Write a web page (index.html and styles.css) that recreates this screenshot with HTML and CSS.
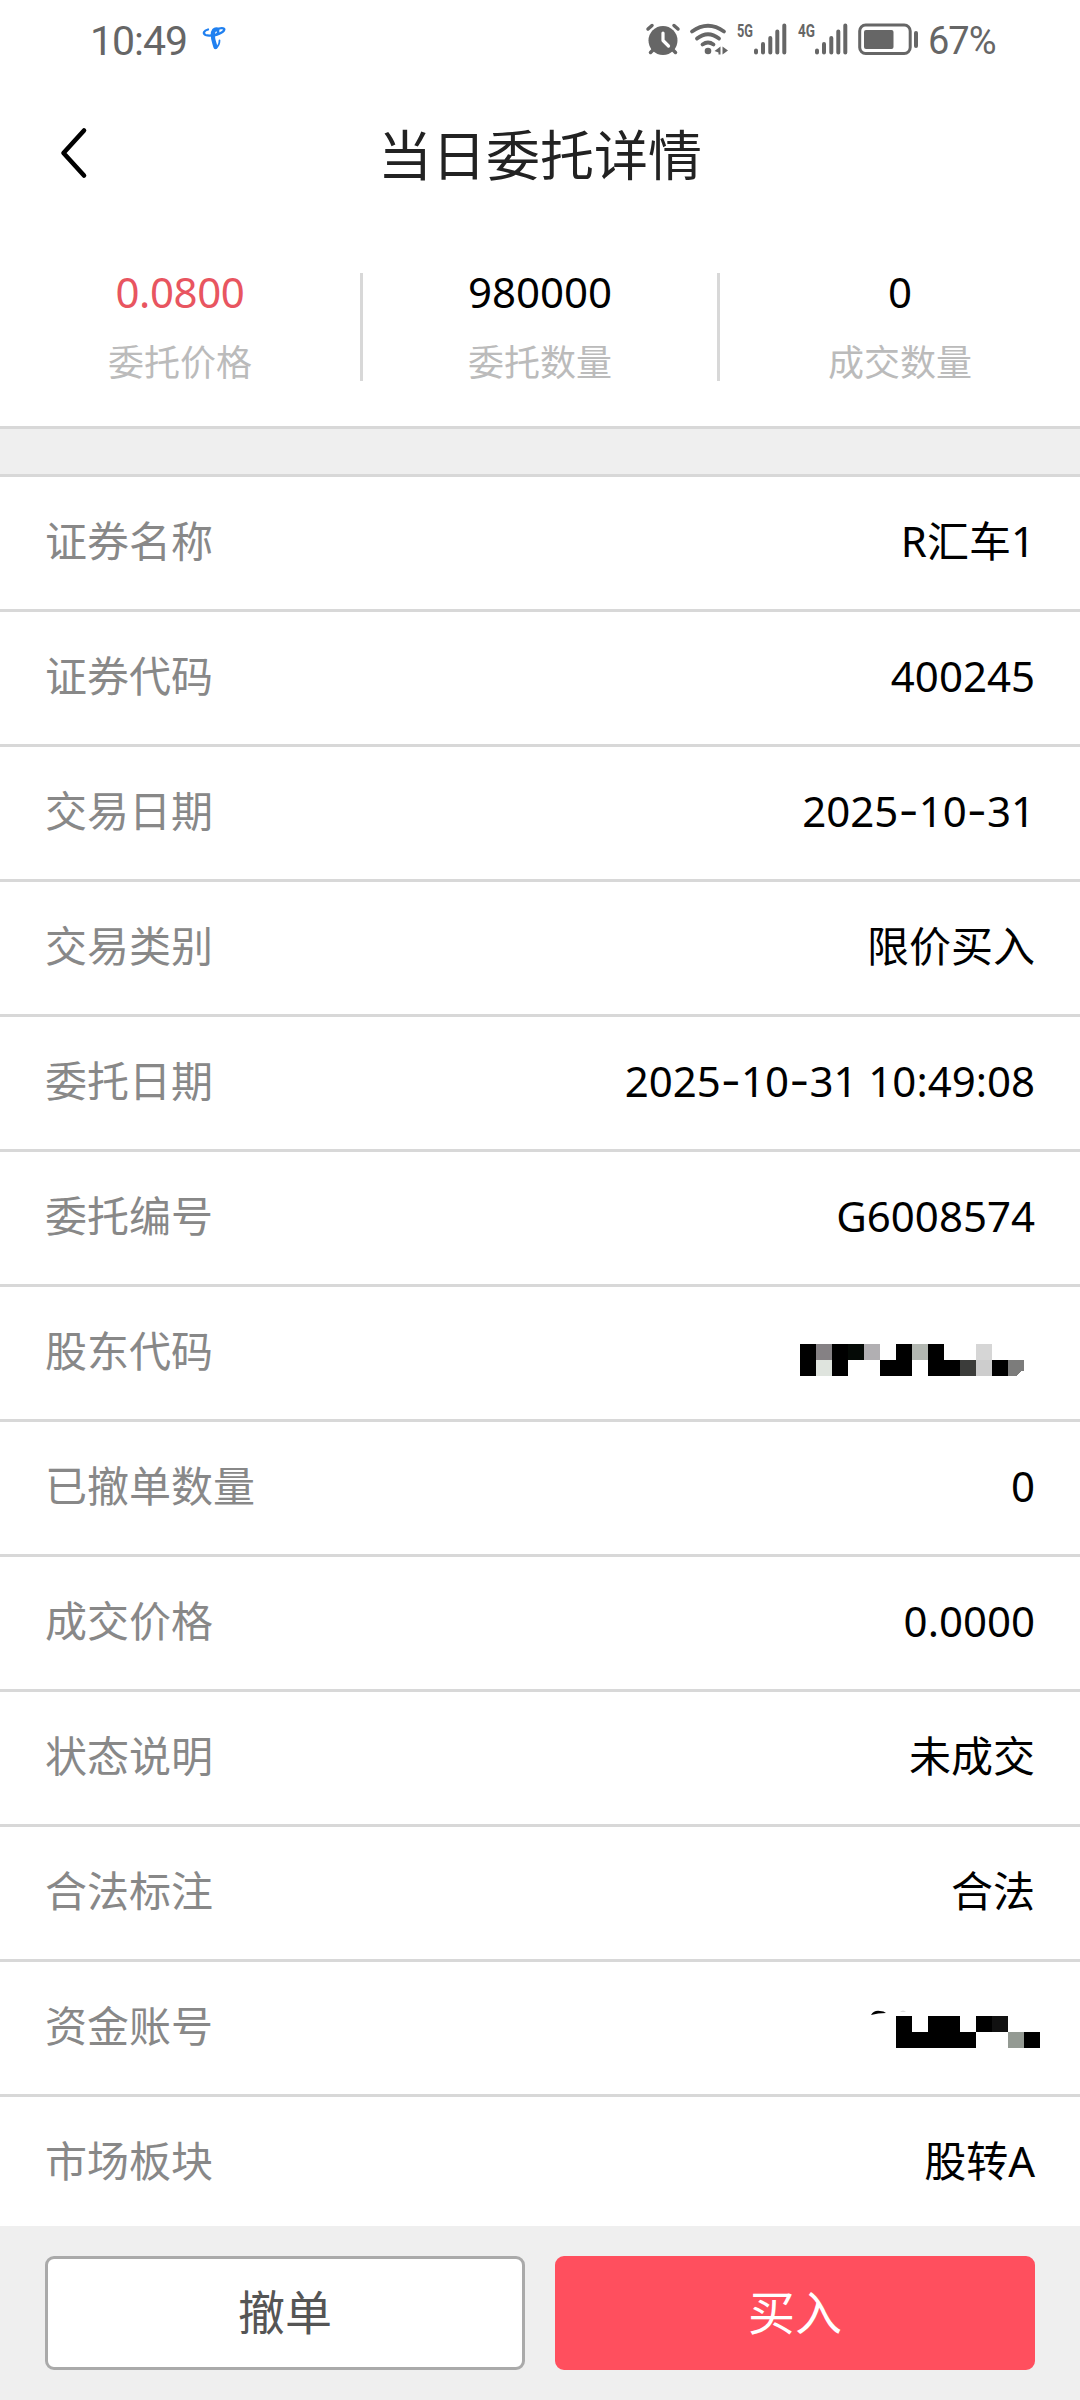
FILE: index.html
```html
<!DOCTYPE html>
<html lang="zh-CN">
<head>
    <meta charset="UTF-8">
    <meta name="viewport" content="width=device-width, initial-scale=1.0">
    <title>当日委托详情</title>
    <link rel="stylesheet" href="styles.css">
</head>
<body>
    <div class="page">
        <div class="status-bar">
            <span class="time">10:49</span>
            <svg class="carrier" width="26" height="26" viewBox="0 0 26 26" fill="none" stroke="#2080f0" stroke-linecap="round" stroke-linejoin="round">
                <path d="M6 3.500C2 4.500 0.500 7.500 3.500 9C8 10.500 19 8.500 22 4.500C23.500 2 20 1.800 17 2.500" stroke-width="2.300"/>
                <path d="M15.500 3.500C12.500 2.500 10.800 5 10.800 9C10.800 14 12.500 17 13.500 21" stroke-width="4.200"/>
                <path d="M12 9.500C16 9 17 6.500 15.500 3.500" stroke-width="2.500"/>
                <path d="M14 22C16.500 20 17.500 17.500 17.500 14.500" stroke-width="1.800"/>
            </svg>
            <div class="status-icons">
                <svg class="alarm" width="38" height="40" viewBox="0 0 38 40">
                    <circle cx="19" cy="20.500" r="14.500" fill="#666"/>
                    <path d="M4 9L8 5.500M34 9L30 5.500M9 30L6.500 32.500M29 30L31.500 32.500" stroke="#666" stroke-width="3.500" stroke-linecap="round"/>
                    <path d="M19 13V20.500L24.500 26" fill="none" stroke="#fff" stroke-width="3.200" stroke-linecap="round" stroke-linejoin="round"/>
                </svg>
                <svg class="wifi" width="44" height="40" viewBox="0 0 44 40">
                    <path d="M5 11.500Q21 0 37 11.500M10 18.500Q21 10 32 18.500M15.500 24.500Q21 20.500 26.500 24.500" fill="none" stroke="#666" stroke-width="3.800" stroke-linecap="round"/>
                    <circle cx="21" cy="31" r="3.300" fill="#666"/>
                    <path d="M27.500 31L33.500 26.500V34.500H31.500V32.500ZM41 30.500L35.500 26.500V34.500Z" fill="#666"/>
                </svg>
                <svg class="signal" width="56" height="40" viewBox="0 0 56 40">
                    <text class="net" x="3" y="17" textLength="16" lengthAdjust="spacingAndGlyphs">5G</text>
                    <path d="M22 30.500V32.500M29 24V32.500M36.300 18V32.500M43.300 11.500V32.500M50.300 5.500V32.500" stroke="#666" stroke-width="4" stroke-linecap="round"/>
                </svg>
                <svg class="signal" width="56" height="40" viewBox="0 0 56 40">
                    <text class="net" x="3" y="17" textLength="17" lengthAdjust="spacingAndGlyphs">4G</text>
                    <path d="M22 30.500V32.500M29 24V32.500M36.300 18V32.500M43.300 11.500V32.500M50.300 5.500V32.500" stroke="#666" stroke-width="4" stroke-linecap="round"/>
                </svg>
                <svg class="battery" width="64" height="40" viewBox="0 0 64 40">
                    <rect x="3.700" y="5" width="50.500" height="28.500" rx="6" fill="none" stroke="#666" stroke-width="3"/>
                    <rect x="8" y="10" width="29.500" height="19" rx="2" fill="#666"/>
                    <path d="M60 13V26" stroke="#666" stroke-width="4" stroke-linecap="round"/>
                </svg>
            </div>
            <span class="percent">67%</span>
        </div>

        <div class="title-bar">
            <a href="#" class="back">
                <svg width="32" height="54" viewBox="0 0 32 54">
                    <path d="M27 4.500L6.500 27L27 49.500" fill="none" stroke="#000" stroke-width="4.600" stroke-linecap="round" stroke-linejoin="round"/>
                </svg>
            </a>
            <h1 class="title">当日委托详情</h1>
        </div>

        <div class="summary">
            <div class="summary-item">
                <div class="num red">0.0800</div>
                <div class="name">委托价格</div>
            </div>
            <div class="summary-item middle">
                <div class="num">980000</div>
                <div class="name">委托数量</div>
            </div>
            <div class="summary-item">
                <div class="num">0</div>
                <div class="name">成交数量</div>
            </div>
        </div>

        <div class="gap"></div>

        <div class="list">
            <div class="row"><span class="label">证券名称</span><span class="value">R汇车1</span></div>
            <div class="row"><span class="label">证券代码</span><span class="value">400245</span></div>
            <div class="row"><span class="label">交易日期</span><span class="value">2025<i>-</i>10<i>-</i>31</span></div>
            <div class="row"><span class="label">交易类别</span><span class="value">限价买入</span></div>
            <div class="row"><span class="label">委托日期</span><span class="value">2025<i>-</i>10<i>-</i>31 10:49:08</span></div>
            <div class="row"><span class="label">委托编号</span><span class="value">G6008574</span></div>
            <div class="row">
                <span class="label">股东代码</span>
                <svg class="mosaic" width="235" height="132" viewBox="0 0 235 132" shape-rendering="crispEdges">
                    <path d="M0 57H16V89H0ZM32 57H48V89H32ZM96 57H112V89H80V73H96ZM128 57H144V73H160V89H128ZM192 73H208V89H192Z"/>
                    <rect x="16" y="57" width="16" height="16" fill="#858184"/>
                    <rect x="16" y="73" width="16" height="16" fill="#dfe4de"/>
                    <rect x="48" y="57" width="16" height="16" fill="#050a06"/>
                    <rect x="64" y="57" width="16" height="16" fill="#b1afb2"/>
                    <rect x="112" y="57" width="16" height="16" fill="#b3b8b2"/>
                    <rect x="160" y="73" width="16" height="16" fill="#3b3c3a"/>
                    <rect x="176" y="57" width="16" height="16" fill="#d6d6d6"/>
                    <rect x="176" y="73" width="16" height="16" fill="#cdcdcd"/>
                    <path d="M208 73H224V84H221L216 89H208Z" fill="#7c7c7b"/>
                </svg>
            </div>
            <div class="row"><span class="label">已撤单数量</span><span class="value">0</span></div>
            <div class="row"><span class="label">成交价格</span><span class="value">0.0000</span></div>
            <div class="row"><span class="label">状态说明</span><span class="value">未成交</span></div>
            <div class="row"><span class="label">合法标注</span><span class="value">合法</span></div>
            <div class="row">
                <span class="label">资金账号</span>
                <svg class="mosaic" width="165" height="132" viewBox="0 0 165 132">
                    <path d="M1 53Q4 48 10 49Q14 49 16 51Q8 51 1 53Z"/>
                    <path d="M30 49.500Q33 48 36 49.500Z" fill="#bbb"/>
                    <path d="M26 54H42V70H58V54H90V70H106V86H26ZM106 54H122V70H106ZM154 70H170V86H154Z"/>
                    <rect x="122" y="54" width="16" height="16" fill="#111"/>
                    <rect x="138" y="70" width="16" height="16" fill="#949a93"/>
                </svg>
            </div>
            <div class="row"><span class="label">市场板块</span><span class="value">股转A</span></div>
        </div>

        <div class="footer">
            <button class="btn cancel">撤单</button>
            <button class="btn buy">买入</button>
        </div>
    </div>
</body>
</html>
```
FILE: styles.css
```css
* {
    box-sizing: border-box;
}
body, html {
    margin: 0;
    padding: 0;
    height: 100%;
    overflow: hidden;
}
body {
    background: #fff;
    color: #000;
    font-family: "Noto Sans", "Noto Sans CJK SC", sans-serif;
}
svg {
    display: block;
    flex: none;
    overflow: visible;
}
.page {
    display: flex;
    flex-direction: column;
    height: 100%;
}
.status-bar {
    display: flex;
    align-items: center;
    flex: none;
    height: 80px;
    padding: 0 83px 0 90px;
    color: #666;
    font-family: Roboto, sans-serif;
}
.time {
    width: 112px;
    padding-top: 2px;
    font-size: 41px;
    letter-spacing: -1px;
}
.carrier {
    margin-bottom: 2px;
}
.status-icons {
    display: flex;
    gap: 5px;
    margin-left: auto;
}
.wifi {
    margin-right: -2px;
}
.net {
    fill: #666;
    font-size: 18px;
    font-weight: bold;
}
.percent {
    width: 69px;
    margin-left: 8px;
    padding-top: 2px;
    font-size: 38px;
    letter-spacing: -1px;
    white-space: nowrap;
}
.title-bar {
    display: flex;
    align-items: center;
    flex: none;
    height: 146px;
    padding: 0 57px;
}
.back {
    width: 32px;
}
.title {
    flex: 1;
    margin: 4px 32px 0 0;
    color: #222;
    font-size: 54px;
    font-weight: normal;
    line-height: 80px;
    text-align: center;
}
.summary {
    display: flex;
    flex: none;
    height: 200px;
    padding-top: 47px;
}
.summary-item {
    flex: 1;
    height: 108px;
    text-align: center;
}
.middle {
    flex: 0 0 360px;
    border: solid #d8d8d8;
    border-width: 0 3px;
}
.num {
    font-size: 42px;
    line-height: 38px;
}
.red {
    color: #e85560;
    letter-spacing: -0.4px;
}
.name {
    margin-top: 32px;
    color: #bbb;
    font-size: 36px;
    line-height: 40px;
}
.gap {
    flex: none;
    height: 51px;
    background: #efefef;
    border-top: 3px solid #d8d8d8;
    border-bottom: 3px solid #d8d8d8;
}
.list {
    flex: 1;
    min-height: 0;
    overflow: hidden;
}
.row {
    display: flex;
    justify-content: space-between;
    height: 135px;
    padding: 0 45px;
    border-bottom: 3px solid #d8d8d8;
    font-size: 42px;
    line-height: 128px;
}
.row:last-child {
    border-bottom: none;
}
.label {
    color: #888;
}
/* wider dash in dates */
.value i {
    font-family: Inter, sans-serif;
    font-size: 44px;
    font-style: normal;
    line-height: 1;
}
.footer {
    display: flex;
    gap: 30px;
    flex: none;
    height: 174px;
    padding: 30px 45px;
    background: #efefef;
}
.btn {
    flex: 1;
    padding: 0 0 7px;
    border: 3px solid #aaa;
    border-radius: 9px;
    background: #fff;
    color: #555;
    font-family: inherit;
    font-size: 47px;
}
.buy {
    border-color: #ff4f5e;
    background: #ff4f5e;
    color: #fff;
}
```
